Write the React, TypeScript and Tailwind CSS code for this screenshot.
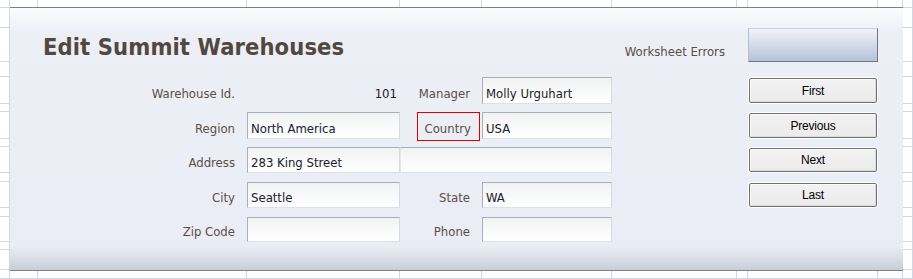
const cellCount = 11 * 16

const label =
  "flex items-end justify-end pr-[12px] pb-[4px] text-[13px] leading-none text-[#5b4e45] font-['DejaVu_Sans_Condensed','DejaVu_Sans',sans-serif]"

const field =
  "flex items-end pl-[3px] pb-[3px] text-[13px] leading-none text-[#20202c] font-['DejaVu_Sans_Condensed','DejaVu_Sans',sans-serif] border border-t-[#a9aeb9] border-l-[#a9aeb9] border-r-[#d6dae2] border-b-[#dde1e8] bg-[linear-gradient(to_bottom,#f1f3f2,#ffffff)]"

function NavButton({ text, row }: { text: string; row: string }) {
  return (
    <div className={`col-start-8 ${row} bg-white p-px`}>
      <button className="flex h-full w-full items-center justify-center rounded-[2px] border border-[#707070] bg-[linear-gradient(to_bottom,#f2f2f2,#ebebeb)] text-[12px] leading-none tracking-[-0.2px] text-black font-['Liberation_Sans',Arial,sans-serif] shadow-[inset_1px_1px_0_#fcfcfc,inset_-1px_-1px_0_#dcdcdc]">
        {text}
      </button>
    </div>
  )
}

export default function App() {
  return (
    <div className="relative h-[279px] w-[913px] overflow-hidden bg-white">
      {/* sheet grid behind the form */}
      <div className="grid grid-cols-[10px_28px_209px_153px_82px_130px_125px_11px_130px_25px_10px] grid-rows-[8px_20px_34px_15px_27px_8px_27px_8px_26px_9px_26px_9px_25px_8px_20px_9px]">
        {Array.from({ length: cellCount }).map((_, i) => (
          <div key={i} className="border-r border-b border-[#d0d7e5]" />
        ))}
      </div>

      {/* form panel */}
      <div className="absolute left-[10px] top-[7px] h-[264px] w-[893px] border-y border-[#808080] bg-[linear-gradient(to_bottom,#fbfcfd_0px,#eceff6_26px,#eaedf5_238px,#dde1ea_248px,#c6cdda_262px)]">
        <div className="grid grid-cols-[28px_209px_153px_82px_130px_125px_11px_130px_25px] grid-rows-[20px_34px_15px_27px_8px_27px_8px_26px_9px_26px_9px_25px_8px_20px]">
          <h1 className="col-span-4 col-start-2 row-start-2 flex items-end pb-[3px] pl-[5px] text-[23.5px] font-bold leading-none tracking-[0.1px] text-[#524840] font-['DejaVu_Sans_Condensed','DejaVu_Sans',sans-serif]">
            Edit Summit Warehouses
          </h1>
          <div className={`col-start-6 row-start-2 ${label}`}>Worksheet Errors</div>
          <div className="col-start-8 row-start-2 border border-t-[#c9d0de] border-l-[#b6bfd0] border-r-[#6f7786] border-b-[#6f7786] bg-[linear-gradient(to_bottom,#f1f3f8,#b5c1d9)]" />

          <div className={`col-start-2 row-start-4 ${label}`}>Warehouse Id.</div>
          <div className="col-start-3 row-start-4 flex items-end justify-end pr-[3px] pb-[4px] text-[13px] leading-none text-[#20202c] font-['DejaVu_Sans_Condensed','DejaVu_Sans',sans-serif]">
            101
          </div>
          <div className={`col-start-4 row-start-4 ${label}`}>Manager</div>
          <div className={`col-start-5 row-start-4 ${field}`}>Molly Urguhart</div>
          <NavButton text="First" row="row-start-4" />

          <div className={`col-start-2 row-start-6 ${label}`}>Region</div>
          <div className={`col-start-3 row-start-6 ${field}`}>North America</div>
          <div className="col-start-4 row-start-6 flex">
            <div className="ml-[17px] flex h-[29px] w-[63px] items-end justify-end border border-[#e00000] pr-[8px] pb-[5px] text-[13px] leading-none text-[#5b4e45] font-['DejaVu_Sans_Condensed','DejaVu_Sans',sans-serif]">
              Country
            </div>
          </div>
          <div className={`col-start-5 row-start-6 ${field}`}>USA</div>
          <NavButton text="Previous" row="row-start-6" />

          <div className={`col-start-2 row-start-8 ${label}`}>Address</div>
          <div className={`col-start-3 row-start-8 ${field}`}>283 King Street</div>
          <div className={`col-span-2 col-start-4 row-start-8 ${field} border-l-[#e4e7ec]`} />
          <NavButton text="Next" row="row-start-8" />

          <div className={`col-start-2 row-start-10 ${label}`}>City</div>
          <div className={`col-start-3 row-start-10 ${field}`}>Seattle</div>
          <div className={`col-start-4 row-start-10 ${label}`}>State</div>
          <div className={`col-start-5 row-start-10 ${field}`}>WA</div>
          <NavButton text="Last" row="row-start-10" />

          <div className={`col-start-2 row-start-12 ${label}`}>Zip Code</div>
          <div className={`col-start-3 row-start-12 ${field}`} />
          <div className={`col-start-4 row-start-12 ${label}`}>Phone</div>
          <div className={`col-start-5 row-start-12 ${field}`} />
        </div>
      </div>
    </div>
  )
}
